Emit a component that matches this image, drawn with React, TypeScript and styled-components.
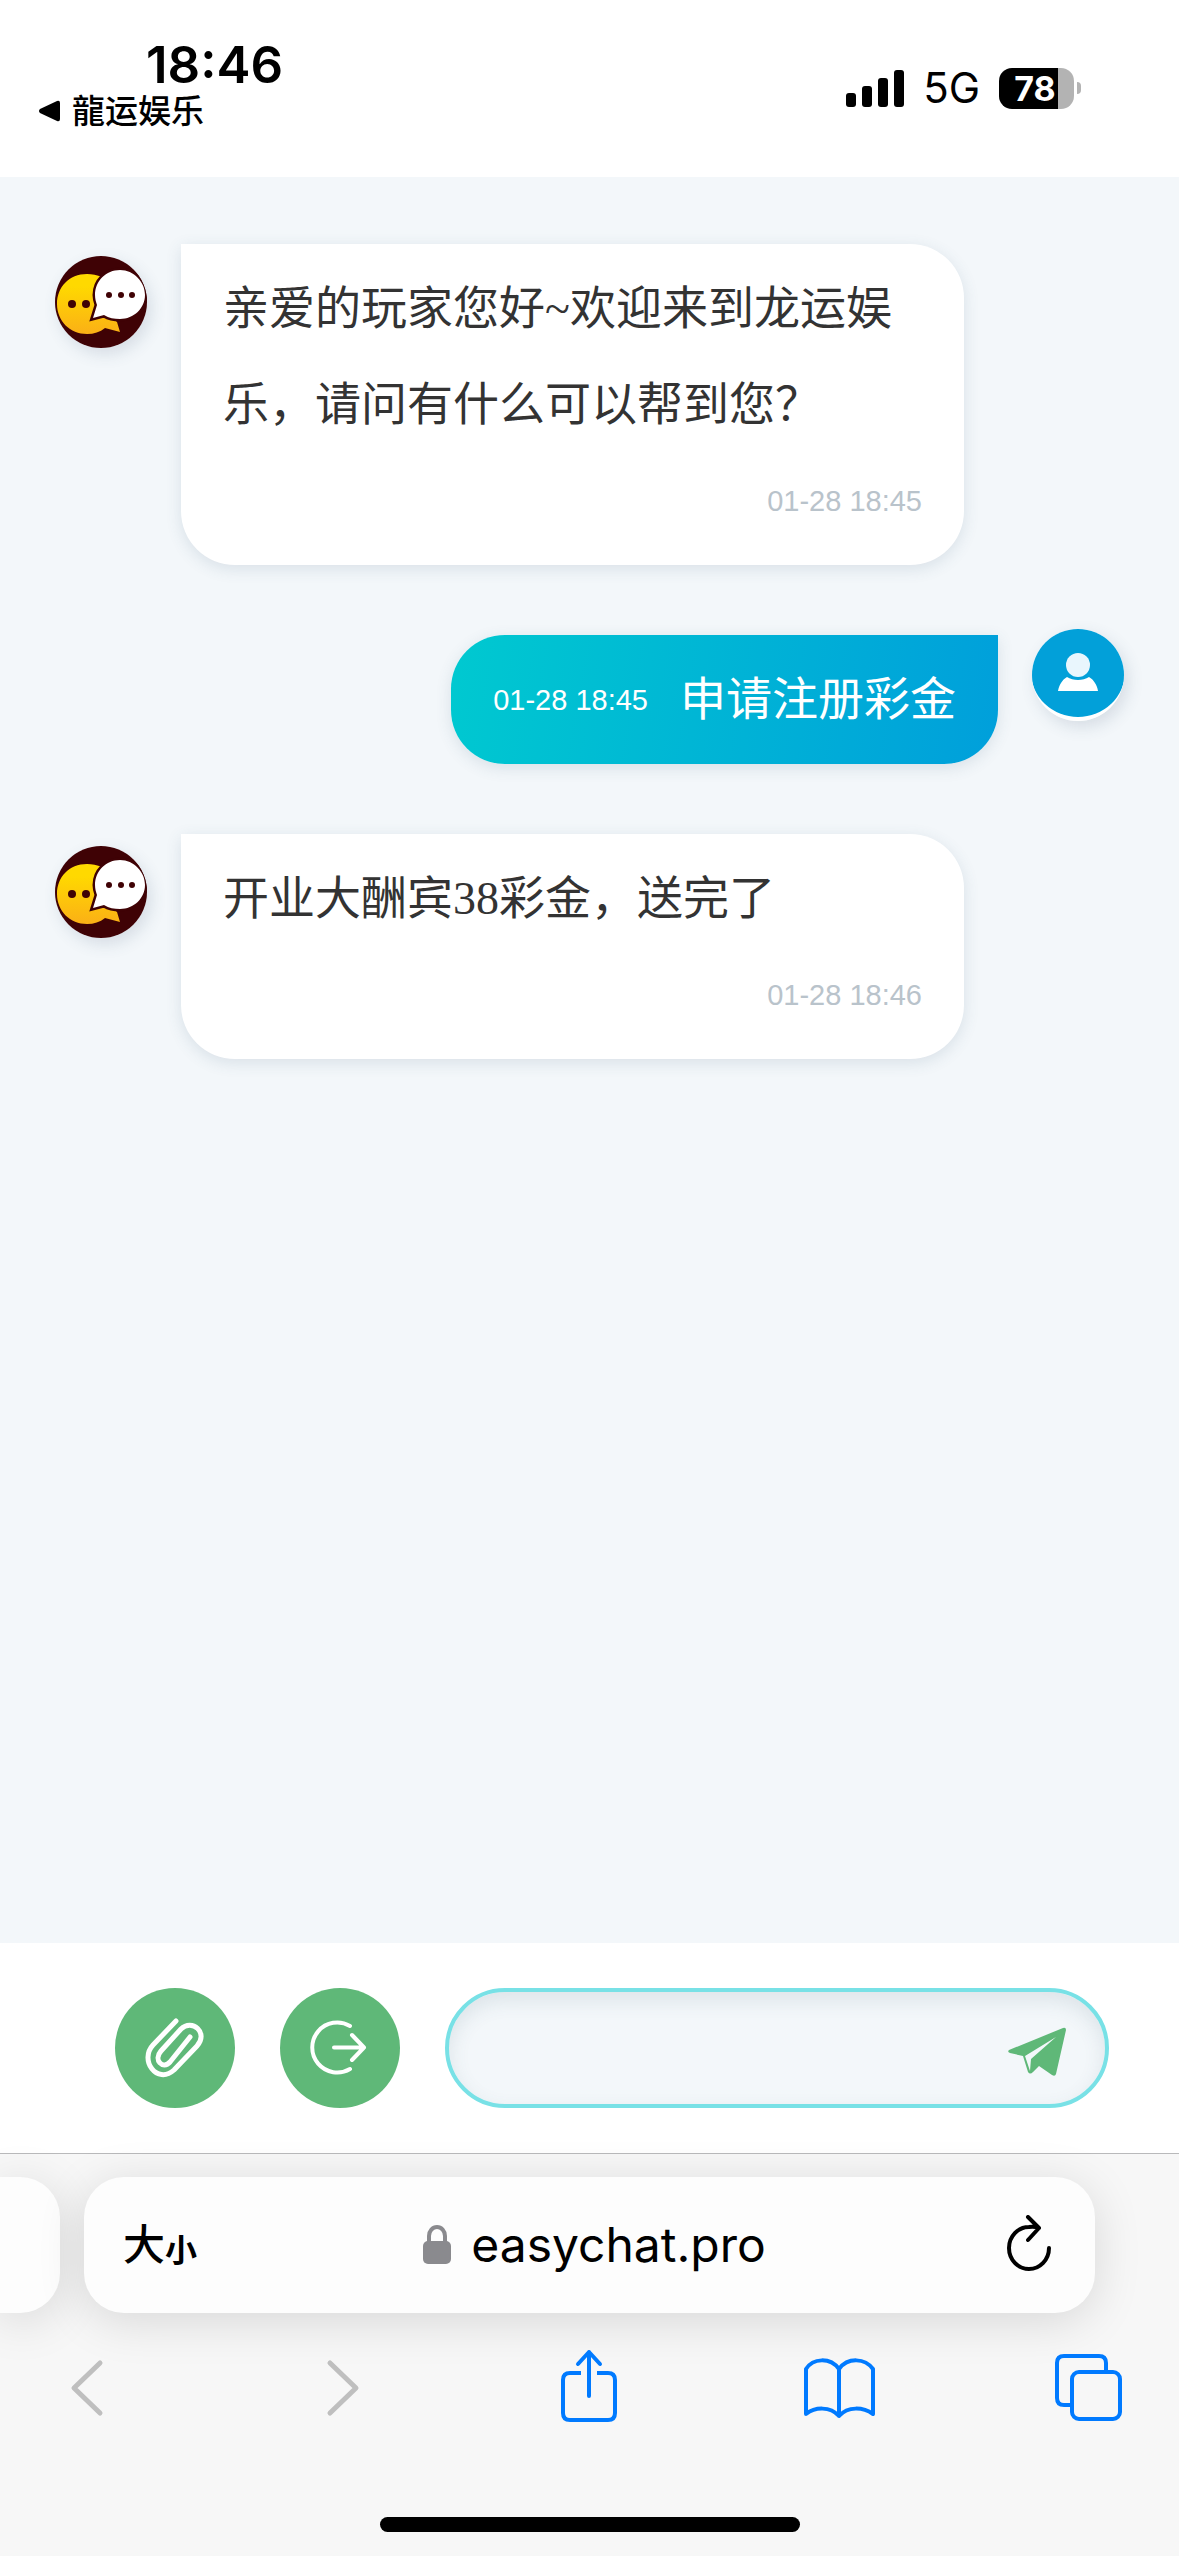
import React, { useState } from "react";
import styled, { createGlobalStyle } from "styled-components";

const sans = `Inter, "Noto Sans CJK SC", sans-serif`;
const chat = `"Liberation Serif", "Noto Sans CJK SC", serif`;
const arial = `"Liberation Sans", Arial, sans-serif`;

const GlobalStyle = createGlobalStyle`
  *, *::before, *::after { box-sizing: border-box; }
  body { margin: 0; background: #f7f7f7; font-family: ${sans}; color: #000; }
  button, input { font: inherit; color: inherit; }
  button { padding: 0; border: 0; background: none; cursor: pointer; }
  svg { display: block; }
`;

const Screen = styled.div`
  display: flex;
  flex-direction: column;
  min-height: 100vh;
`;

const StatusBar = styled.header`
  display: flex;
  justify-content: space-between;
  align-items: flex-start;
  height: 177px;
  padding: 40px 98px 0 39px;
  background: #fff;
`;

const Clock = styled.time`
  display: block;
  padding-left: 107px;
  font-size: 51px;
  font-weight: 600;
  line-height: 50px;
`;

const BackLink = styled.a`
  display: flex;
  align-items: center;
  gap: 12px;
  font-size: 33px;
  font-weight: 500;
  line-height: 42px;
  color: inherit;
  text-decoration: none;
`;

const Indicators = styled.div`
  display: flex;
  align-items: center;
  gap: 19px;
  padding-top: 24px;
`;

const Network = styled.span`
  font-size: 42px;
  line-height: 48px;
`;

const Battery = styled.div`
  display: flex;
  align-items: center;
  gap: 3px;
`;

const BatteryBody = styled.div`
  width: 75px;
  height: 41px;
  padding-right: 3px;
  border-radius: 13px;
  background: linear-gradient(90deg, #000 79%, #b3b3b3 79%);
  color: #fff;
  font-size: 34px;
  font-weight: 700;
  line-height: 41px;
  text-align: center;
`;

const BatteryTip = styled.div`
  width: 4px;
  height: 12px;
  border-radius: 0 4px 4px 0;
  background: #b3b3b3;
`;

const Chat = styled.main`
  display: flex;
  flex: 1;
  flex-direction: column;
  gap: 70px;
  padding: 67px 55px;
  background: #f3f7fa;
`;

const Row = styled.article<{ $mine?: boolean }>`
  display: flex;
  flex-direction: ${(p) => (p.$mine ? "row-reverse" : "row")};
  align-items: flex-start;
  gap: 34px;
  padding-right: ${(p) => (p.$mine ? "0" : "160px")};
`;

const Avatar = styled.div<{ $mine?: boolean }>`
  flex: none;
  width: 92px;
  height: 92px;
  margin-top: ${(p) => (p.$mine ? "-6px" : "12px")};
  border-radius: 50%;
  overflow: hidden;
  box-shadow: 4px 6px 16px rgba(60, 90, 120, 0.16);
`;

const Bubble = styled.div<{ $mine?: boolean }>`
  display: flex;
  flex: ${(p) => (p.$mine ? "none" : "1")};
  flex-direction: ${(p) => (p.$mine ? "row-reverse" : "column")};
  gap: ${(p) => (p.$mine ? "32px" : "0")};
  padding: 17px 42px 16px;
  border-radius: ${(p) => (p.$mine ? "54px 0 54px 54px" : "0 54px 54px 54px")};
  background: ${(p) => (p.$mine ? "linear-gradient(100deg, #00c9d0, #009fdb)" : "#fff")};
  color: ${(p) => (p.$mine ? "#fff" : "#333")};
  box-shadow: 0 4px 16px rgba(60, 90, 120, 0.14);
`;

const Message = styled.p`
  margin: 0;
  font-family: ${chat};
  font-size: 46px;
  line-height: 96px;
`;

const Stamp = styled.time<{ $mine?: boolean }>`
  font-family: ${arial};
  font-size: 29px;
  line-height: 96px;
  text-align: right;
  color: ${(p) => (p.$mine ? "#fff" : "#b9c3cb")};
`;

const Composer = styled.form`
  display: flex;
  gap: 45px;
  padding: 45px 70px 45px 115px;
  background: #fff;
`;

const RoundButton = styled.button`
  display: grid;
  place-items: center;
  flex: none;
  width: 120px;
  height: 120px;
  border-radius: 50%;
  background: #5fb878;
`;

const Field = styled.div`
  display: flex;
  flex: 1;
  align-items: center;
  min-width: 0;
  height: 120px;
  padding: 0 37px;
  border: 4px solid #78e1e6;
  border-radius: 60px;
  background: #f3f7fa;
  box-shadow: inset 0 8px 20px rgba(60, 90, 110, 0.12);
`;

const TextInput = styled.input`
  flex: 1;
  min-width: 0;
  height: 100%;
  border: 0;
  outline: 0;
  background: none;
  font-size: 46px;
`;

const Browser = styled.footer`
  border-top: 1px solid #b9b9bb;
  background: #f7f7f7;
`;

const TabStrip = styled.div`
  display: flex;
  gap: 24px;
  padding: 23px 84px 0 0;
`;

const TabCard = styled.div`
  height: 136px;
  background: #fdfdfd;
  box-shadow: 0 8px 48px rgba(0, 0, 0, 0.13);
`;

const PreviousTab = styled(TabCard)`
  width: 60px;
  border-radius: 0 40px 40px 0;
`;

const AddressBar = styled(TabCard)`
  display: flex;
  flex: 1;
  align-items: center;
  justify-content: space-between;
  padding: 0 28px 0 38px;
  border-radius: 40px;
`;

const AddressButton = styled.button`
  display: flex;
  align-items: flex-end;
  justify-content: center;
  width: 76px;
  font-size: 42px;
  font-weight: 500;
  line-height: 48px;
  white-space: nowrap;
`;

const SmallGlyph = styled.span`
  font-size: 32px;
  font-weight: 700;
  line-height: 36px;
`;

const Address = styled.div`
  display: flex;
  align-items: center;
  gap: 20px;
  font-size: 48px;
  line-height: 60px;
`;

const Toolbar = styled.nav`
  display: flex;
  justify-content: space-between;
  padding: 25px 40px 0 37px;
`;

const ToolButton = styled.button`
  width: 100px;
  height: 100px;
  color: #007aff;

  &:disabled {
    color: #bfbfbf;
  }
`;

const HomeIndicator = styled.div`
  width: 420px;
  height: 15px;
  margin: 79px auto 24px;
  border-radius: 8px;
  background: #000;
`;

const BotAvatar = () => (
  <svg width="92" height="92" viewBox="0 0 92 92" role="img" aria-label="客服">
    <defs>
      <linearGradient id="gold" x1="0" y1="0" x2="0" y2="1">
        <stop offset="0.2" stopColor="#ffd900" />
        <stop offset="1" stopColor="#fbb016" />
      </linearGradient>
    </defs>
    <rect width="92" height="92" fill="#3f0205" />
    <path
      d="M32 18C14 18 2 31 2 48s13 30 30 30c7 0 13-2 18-6l15 4-3-10c-8-5-8-28-15-45-5-2-10-3-15-3Z"
      fill="url(#gold)"
    />
    <circle cx="17" cy="48" r="4" fill="#3f0205" />
    <circle cx="31" cy="48" r="4" fill="#3f0205" />
    <path
      d="M65 14c-14 0-25 11-25 25 0 4 1 7 2 10l-4 13 11-3c5 3 10 4 16 4 14 0 25-11 25-24S79 14 65 14Z"
      fill="#fff"
      stroke="#3f0205"
      strokeWidth="5"
      paintOrder="stroke"
    />
    <circle cx="54" cy="39" r="3" fill="#3f0205" />
    <circle cx="66" cy="39" r="3" fill="#3f0205" />
    <circle cx="77" cy="39" r="3" fill="#3f0205" />
  </svg>
);

const UserAvatar = () => (
  <svg width="92" height="92" viewBox="0 0 92 92" role="img" aria-label="我">
    <rect width="92" height="92" fill="#fff" />
    <ellipse cx="46" cy="43" rx="47" ry="45" fill="#02a0d9" />
    <circle cx="46" cy="36" r="12" fill="#e9f6fd" />
    <path d="M35 48c3 2 7 3 11 3s8-1 11-3c5 3 8 8 9 14H26c1-6 4-11 9-14Z" fill="#fff" />
  </svg>
);

type Entry = { text: string; stamp: string; mine?: boolean };

const entries: Entry[] = [
  { text: "亲爱的玩家您好~欢迎来到龙运娱乐，请问有什么可以帮到您？", stamp: "01-28 18:45" },
  { text: "申请注册彩金", stamp: "01-28 18:45", mine: true },
  { text: "开业大酬宾38彩金，送完了", stamp: "01-28 18:46" },
];

export default function App() {
  const [draft, setDraft] = useState("");

  return (
    <Screen lang="zh-CN">
      <GlobalStyle />
      <StatusBar>
        <div>
          <Clock>18:46</Clock>
          <BackLink href="#">
            <svg width="21" height="22" viewBox="0 0 21 22" aria-hidden="true">
              <path d="M1 9 18 1q3-1 3 2v16q0 3-3 2L1 13q-2-2 0-4Z" />
            </svg>
            龍运娱乐
          </BackLink>
        </div>
        <Indicators>
          <svg width="58" height="37" viewBox="0 0 58 37" aria-hidden="true">
            <rect y="23" width="10" height="14" rx="3" />
            <rect x="16" y="16" width="10" height="21" rx="3" />
            <rect x="32" y="8" width="10" height="29" rx="3" />
            <rect x="48" width="10" height="37" rx="3" />
          </svg>
          <Network>5G</Network>
          <Battery>
            <BatteryBody>78</BatteryBody>
            <BatteryTip />
          </Battery>
        </Indicators>
      </StatusBar>

      <Chat>
        {entries.map((entry, index) => (
          <Row key={index} $mine={entry.mine}>
            <Avatar $mine={entry.mine}>{entry.mine ? <UserAvatar /> : <BotAvatar />}</Avatar>
            <Bubble $mine={entry.mine}>
              <Message>{entry.text}</Message>
              <Stamp $mine={entry.mine}>{entry.stamp}</Stamp>
            </Bubble>
          </Row>
        ))}
      </Chat>

      <Composer onSubmit={(event) => event.preventDefault()}>
        <RoundButton type="button" aria-label="附件">
          <svg width="120" height="120" viewBox="0 0 120 120" fill="none" stroke="#fff" strokeWidth="5" strokeLinecap="round" strokeLinejoin="round">
            <path d="M61 33 38 57C24 72 42 97 59 82L82 58C94 45 77 30 66 41L46 63C38 72 48 82 55 74L75 49" />
          </svg>
        </RoundButton>
        <RoundButton type="button" aria-label="退出">
          <svg width="120" height="120" viewBox="0 0 120 120" fill="none" stroke="#fff" strokeWidth="4" strokeLinecap="round" strokeLinejoin="round">
            <path d="M70 38A25 25 0 1 0 70 81M54 59.500H84M72 47 84 59.500 72 72" />
          </svg>
        </RoundButton>
        <Field>
          <TextInput aria-label="消息" value={draft} onChange={(event) => setDraft(event.target.value)} />
          <button type="submit" aria-label="发送">
            <svg width="60" height="60" viewBox="0 0 60 60" fill="#5fb878">
              <path d="M55 10q3-1 3 2l-10 44q-1 3-4 1L31 48l-6 6q-3 3-5 0L15 38 2 35q-3-1-1-3ZM48 19 17 38l5 15 1-12Z" fillRule="evenodd" />
            </svg>
          </button>
        </Field>
      </Composer>

      <Browser>
        <TabStrip>
          <PreviousTab />
          <AddressBar>
            <AddressButton type="button">
              大<SmallGlyph>小</SmallGlyph>
            </AddressButton>
            <Address>
              <svg width="28" height="40" viewBox="0 0 28 40" aria-hidden="true">
                <rect y="16" width="28" height="23" rx="5" fill="#8a8a8e" />
                <path d="M6 18V11a8 9 0 0 1 16 0v7" fill="none" stroke="#8a8a8e" strokeWidth="4" />
              </svg>
              easychat.pro
            </Address>
            <AddressButton type="button" aria-label="刷新">
              <svg width="44" height="60" viewBox="0 0 44 60" fill="none" stroke="#000" strokeWidth="4" strokeLinecap="round" strokeLinejoin="round">
                <path d="M42 33A20 21 0 1 1 22 12Q27 11 32 13M21 2 32 13 21 25" />
              </svg>
            </AddressButton>
          </AddressBar>
        </TabStrip>
        <Toolbar>
          <ToolButton type="button" aria-label="后退" disabled>
            <svg width="100" height="100" viewBox="0 0 100 100" fill="none" stroke="currentColor" strokeWidth="5" strokeLinecap="round" strokeLinejoin="round">
              <path d="M63 25 37 50 63 75" />
            </svg>
          </ToolButton>
          <ToolButton type="button" aria-label="前进" disabled>
            <svg width="100" height="100" viewBox="0 0 100 100" fill="none" stroke="currentColor" strokeWidth="5" strokeLinecap="round" strokeLinejoin="round">
              <path d="M42 25 68 50 42 75" />
            </svg>
          </ToolButton>
          <ToolButton type="button" aria-label="分享">
            <svg width="100" height="100" viewBox="0 0 100 100" fill="none" stroke="currentColor" strokeWidth="4" strokeLinejoin="round">
              <path d="M43 35H32q-7 0-7 7v33q0 7 7 7h38q7 0 7-7V42q0-7-7-7H59" />
              <path d="M51 58V14M40 26 51 14 62 26" strokeLinecap="round" />
            </svg>
          </ToolButton>
          <ToolButton type="button" aria-label="书签">
            <svg width="100" height="100" viewBox="0 0 100 100" fill="none" stroke="currentColor" strokeWidth="4" strokeLinejoin="round" strokeLinecap="round">
              <path d="M50 31C41 19 24 20 17 31V76C26 69 41 68 50 78 59 68 74 69 84 76V31C76 20 59 19 50 31V78" />
            </svg>
          </ToolButton>
          <ToolButton type="button" aria-label="标签页">
            <svg width="100" height="100" viewBox="0 0 100 100" fill="none" stroke="currentColor" strokeWidth="4">
              <rect x="33" y="34" width="48" height="47" rx="7" />
              <path d="M33 67H25q-7 0-7-7V25q0-7 7-7H60q7 0 7 7v9" />
            </svg>
          </ToolButton>
        </Toolbar>
        <HomeIndicator />
      </Browser>
    </Screen>
  );
}
